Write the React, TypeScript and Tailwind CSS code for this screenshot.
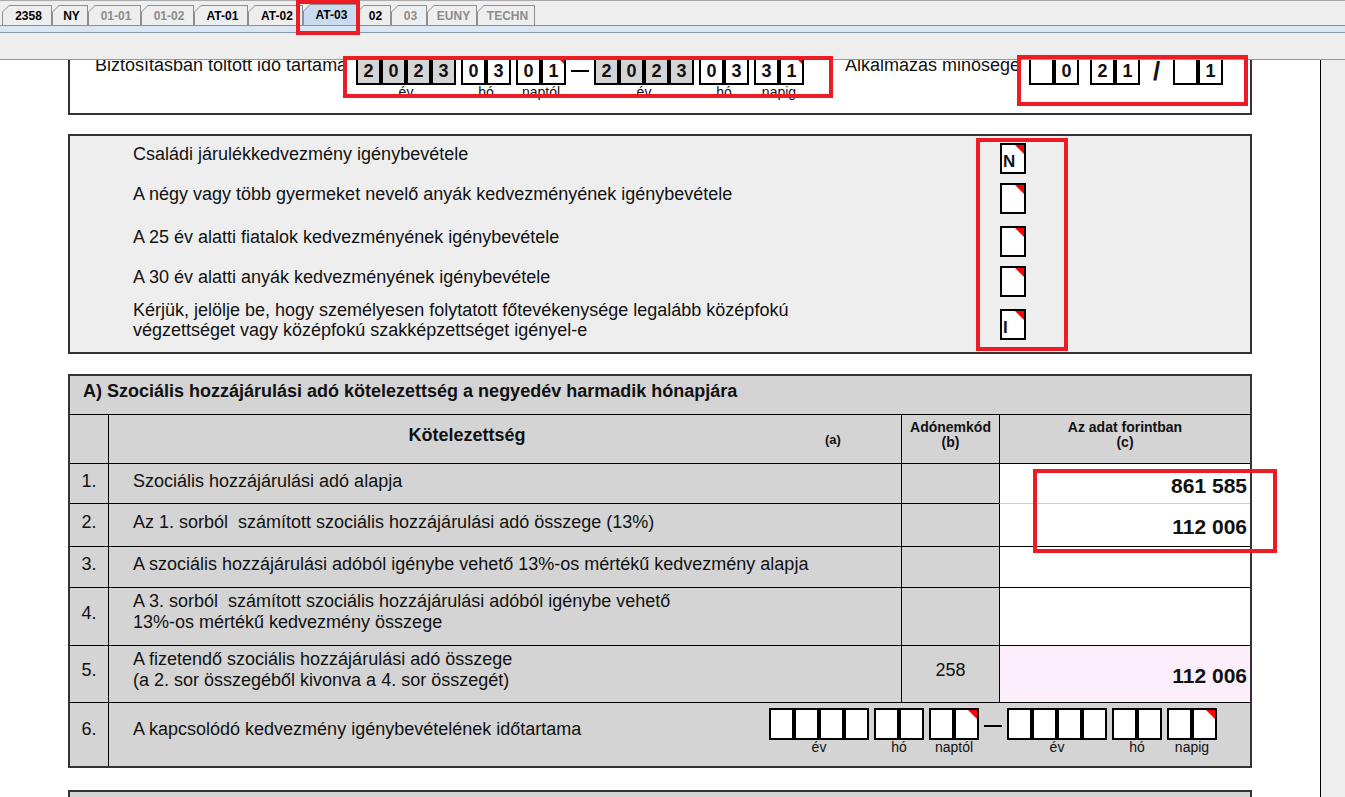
import React from 'react'

type Tab = { label: string; w: string; dim?: boolean; active?: boolean }

const tabs: Tab[] = [
  { label: '2358', w: 'w-[50px]' },
  { label: 'NY', w: 'w-[36px]' },
  { label: '01-01', w: 'w-[53px]', dim: true },
  { label: '01-02', w: 'w-[53px]', dim: true },
  { label: 'AT-01', w: 'w-[54px]' },
  { label: 'AT-02', w: 'w-[55px]' },
  { label: 'AT-03', w: 'w-[54px]', active: true },
  { label: '02', w: 'w-[34px]' },
  { label: '03', w: 'w-[36px]', dim: true },
  { label: 'EUNY', w: 'w-[50px]', dim: true },
  { label: 'TECHN', w: 'w-[58px]', dim: true },
]

function TabBar() {
  return (
    <>
      <div className="flex h-[25px] items-end border-t border-[#a9a9a9] pl-[2px]">
        {tabs.map((t) => (
          <div
            key={t.label}
            className={`${t.w} ${t.active ? 'h-[21px]' : 'h-[20px]'} bg-[#8e8f90] px-px pt-px [clip-path:polygon(0_7px,7px_0,100%_0,100%_100%,0_100%)]`}
          >
            <div
              className={`flex h-full items-center justify-center pl-[3px] text-[12px] font-bold [clip-path:polygon(0_6px,6px_0,100%_0,100%_100%,0_100%)] ${
                t.active ? 'bg-[#c8dbf1] text-black' : 'bg-[#eeeeee]'
              } ${t.dim ? 'text-[#8c8c8c]' : 'text-black'}`}
            >
              {t.label}
            </div>
          </div>
        ))}
      </div>
      <div className="h-[8px] border-y border-t-[#6f93c8] border-b-[#8597ab] bg-[#dbe6f4]" />
      <div className="h-[26px]" />
    </>
  )
}

function RedCorner() {
  return <span className="absolute right-0 top-0 h-[9px] w-[9px] bg-[#ff0000] [clip-path:polygon(0_0,100%_0,100%_100%)]" />
}

function BlueCorner() {
  return <span className="absolute right-0 top-0 h-[5px] w-[5px] bg-[#2020ff] [clip-path:polygon(0_0,100%_0,100%_100%)]" />
}

function Cell({ v, shade, red, blue }: { v?: string; shade?: boolean; red?: boolean; blue?: boolean }) {
  return (
    <div
      className={`relative flex h-[32px] w-[25px] items-center justify-center border-2 border-black pt-[4px] text-[18px] font-bold text-[#111] ${
        shade ? 'bg-[#d4d4d4]' : 'bg-white'
      }`}
    >
      {v}
      {red && <RedCorner />}
      {blue && <BlueCorner />}
    </div>
  )
}

function Group({ digits, label, shade, red }: { digits: string[]; label: string; shade?: boolean; red?: boolean }) {
  return (
    <div className="flex flex-col items-center">
      <div className="flex">
        {digits.map((d, i) => (
          <Cell key={i} v={d} shade={shade} red={red && i === digits.length - 1} />
        ))}
      </div>
      <div className="text-[14px] leading-[14px] text-[#111]">{label}</div>
    </div>
  )
}

function DateRange({ from, to, shadeYear }: { from: string; to: string; shadeYear?: boolean }) {
  const part = (s: string, a: number, b: number) => {
    const got = s.slice(a, b).split('')
    while (got.length < b - a) got.push('')
    return got
  }
  return (
    <div className="flex">
      <Group digits={part(from, 0, 4)} label="év" shade={shadeYear} />
      <div className="ml-[5px]">
        <Group digits={part(from, 4, 6)} label="hó" />
      </div>
      <div className="ml-[5px]">
        <Group digits={part(from, 6, 8)} label="naptól" red />
      </div>
      <div className="flex h-[32px] w-[28px] items-center justify-center pt-[3px]">
        <div className="h-[2px] w-[18px] bg-black" />
      </div>
      <Group digits={part(to, 0, 4)} label="év" shade={shadeYear} />
      <div className="ml-[5px]">
        <Group digits={part(to, 4, 6)} label="hó" />
      </div>
      <div className="ml-[5px]">
        <Group digits={part(to, 6, 8)} label="napig" red />
      </div>
    </div>
  )
}

function CheckBox({ v }: { v?: string }) {
  return (
    <div className="relative h-[31px] w-[26px] border-2 border-black bg-white pl-px pt-[8px] text-[17px] font-bold leading-[17px] text-[#151515]">
      {v}
      <RedCorner />
    </div>
  )
}

const checks = [
  { text: ['Családi járulékkedvezmény igénybevétele'], h: 'h-[40px]', v: 'N' },
  { text: ['A négy vagy több gyermeket nevelő anyák kedvezményének igénybevétele'], h: 'h-[43px]' },
  { text: ['A 25 év alatti fiatalok kedvezményének igénybevétele'], h: 'h-[40px]' },
  { text: ['A 30 év alatti anyák kedvezményének igénybevétele'], h: 'h-[43px]' },
  {
    text: [
      'Kérjük, jelölje be, hogy személyesen folytatott főtevékenysége legalább középfokú',
      'végzettséget vagy középfokú szakképzettséget igényel-e',
    ],
    h: 'h-[40px]',
    v: 'I',
  },
]

type Row = {
  n: string
  text: string[]
  h: string
  pt: string
  numPt: string
  code?: string
  amount?: string
  amountCls: string
}

const rows: Row[] = [
  { n: '1.', text: ['Szociális hozzájárulási adó alapja'], h: 'h-[40px]', pt: 'pt-[7px]', numPt: 'pt-[7px]', amount: '861 585', amountCls: 'bg-white border-black' },
  { n: '2.', text: ['Az 1. sorból  számított szociális hozzájárulási adó összege (13%)'], h: 'h-[43px]', pt: 'pt-[8px]', numPt: 'pt-[8px]', amount: '112 006', amountCls: 'bg-white border-[#cfcfcf]' },
  { n: '3.', text: ['A szociális hozzájárulási adóból igénybe vehető 13%-os mértékű kedvezmény alapja'], h: 'h-[41px]', pt: 'pt-[7px]', numPt: 'pt-[7px]', amountCls: 'bg-white border-black' },
  {
    n: '4.',
    text: ['A 3. sorból  számított szociális hozzájárulási adóból igénybe vehető', '13%-os mértékű kedvezmény összege'],
    h: 'h-[58px]',
    pt: 'pt-[3px]',
    numPt: 'pt-[15px]',
    amountCls: 'bg-white border-black',
  },
  {
    n: '5.',
    text: ['A fizetendő szociális hozzájárulási adó összege', '(a 2. sor összegéből kivonva a 4. sor összegét)'],
    h: 'h-[57px]',
    pt: 'pt-[3px]',
    numPt: 'pt-[14px]',
    code: '258',
    amount: '112 006',
    amountCls: 'bg-[#fdeefc] border-black',
  },
]

function TableRow({ r }: { r: Row }) {
  return (
    <div className={`flex ${r.h} text-[18px] leading-[21px] text-[#111]`}>
      <div className={`w-[38px] border-t border-black text-center ${r.numPt}`}>{r.n}</div>
      <div className={`w-[793px] border-l border-t border-black pl-[24px] whitespace-pre ${r.pt}`}>
        {r.text.map((l) => (
          <div key={l}>{l}</div>
        ))}
      </div>
      <div className={`w-[98px] border-l border-t border-black text-center ${r.numPt}`}>{r.code}</div>
      <div className={`flex flex-1 items-center justify-end border-l border-l-black border-t pr-[3px] pt-[4px] text-[21px] font-bold leading-[24px] ${r.amountCls}`}>
        {r.amount}
      </div>
    </div>
  )
}

export default function App() {
  return (
    <div className="relative h-[797px] w-[1345px] overflow-hidden bg-[#eeeeee] font-['Liberation_Sans',Arial,sans-serif] text-[#111]">
      <TabBar />

      <div className="flex h-[738px] border-t border-[#8d99a6]">
        <div className="flex w-[1320px] flex-col overflow-hidden bg-white">
          {/* box 1 - partly scrolled out */}
          <div className="-mt-[25px] ml-[68px] flex h-[80px] w-[1184px] shrink-0 border-2 border-[#333] bg-white">
            <div className="w-[286px] whitespace-nowrap pl-[25px] pt-[18px] text-[18px] leading-[21px]">
              Biztosításban töltött idő tartama
            </div>
            <div className="w-[489px] pt-[16px]">
              <DateRange from="20230301" to="20230331" shadeYear />
            </div>
            <div className="w-[184px] overflow-hidden whitespace-nowrap pt-[18px] text-[18px] leading-[21px]">
              Alkalmazás minősége
            </div>
            <div className="flex pt-[16px]">
              <div className="flex h-[32px]">
                <Cell />
                <Cell v="0" blue />
              </div>
              <div className="ml-[11px] flex h-[32px]">
                <Cell v="2" />
                <Cell v="1" blue />
              </div>
              <div className="flex h-[32px] w-[33px] items-center justify-center pt-[5px] text-[26px] font-bold">/</div>
              <div className="flex h-[32px]">
                <Cell />
                <Cell v="1" />
              </div>
            </div>
          </div>

          {/* box 2 - checkboxes */}
          <div className="ml-[68px] mt-[19px] h-[220px] w-[1184px] shrink-0 border-2 border-[#333] bg-[#eeeeee] pt-[7px]">
            {checks.map((c, i) => (
              <div key={i} className={`flex ${c.h}`}>
                <div className={`w-[930px] pl-[63px] text-[18px] leading-[20px] text-[#111] ${c.text.length > 1 ? '-mt-[9px]' : 'pt-px'}`}>
                  {c.text.map((l) => (
                    <div key={l}>{l}</div>
                  ))}
                </div>
                <CheckBox v={c.v} />
              </div>
            ))}
          </div>

          {/* box 3 - table */}
          <div className="ml-[68px] mt-[20px] w-[1184px] shrink-0 border-2 border-[#333] bg-[#d4d4d4]">
            <div className="h-[38px] pl-[13px] pt-[5px] text-[18px] font-bold leading-[21px]">
              A) Szociális hozzájárulási adó kötelezettség a negyedév harmadik hónapjára
            </div>
            <div className="flex h-[49px]">
              <div className="w-[38px] border-t border-black" />
              <div className="flex w-[793px] border-l border-t border-black">
                <div className="w-[716px] pt-[10px] text-center text-[18px] font-bold leading-[21px]">Kötelezettség</div>
                <div className="pt-[17px] text-[13px] font-bold leading-[15px]">(a)</div>
              </div>
              <div className="w-[98px] border-l border-t border-black pt-[5px] text-center text-[14px] font-bold leading-[15px]">
                Adónemkód
                <br />
                (b)
              </div>
              <div className="flex-1 border-l border-t border-black pt-[5px] text-center text-[14px] font-bold leading-[15px]">
                Az adat forintban
                <br />
                (c)
              </div>
            </div>
            {rows.map((r) => (
              <TableRow key={r.n} r={r} />
            ))}
            <div className="flex h-[64px] text-[18px] leading-[21px]">
              <div className="w-[38px] border-t border-black pt-[16px] text-center">6.</div>
              <div className="flex flex-1 border-l border-t border-black">
                <div className="w-[660px] pl-[24px] pt-[16px]">A kapcsolódó kedvezmény igénybevételének időtartama</div>
                <div className="pt-[5px]">
                  <DateRange from="" to="" />
                </div>
              </div>
            </div>
          </div>

          {/* box 4 - next section */}
          <div className="ml-[68px] mt-[22px] h-[100px] w-[1184px] shrink-0 border-2 border-[#333] bg-[#d4d4d4]" />
        </div>
        <div className="w-px bg-black" />
        <div className="flex-1 bg-[#eeeeee]" />
      </div>

      {/* red annotation frames */}
      <div className="absolute left-[296px] top-0 h-[35px] w-[64px] border-4 border-[#ed1c24]" />
      <div className="absolute left-[343px] top-[56px] h-[42px] w-[490px] border-4 border-[#ed1c24]" />
      <div className="absolute left-[1017px] top-[55px] h-[51px] w-[231px] border-4 border-[#ed1c24]" />
      <div className="absolute left-[976px] top-[138px] h-[213px] w-[92px] border-4 border-[#ed1c24]" />
      <div className="absolute left-[1033px] top-[469px] h-[84px] w-[244px] border-4 border-[#ed1c24]" />
    </div>
  )
}
